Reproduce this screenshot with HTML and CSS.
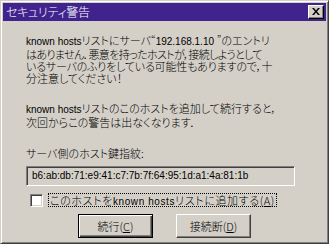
FILE: index.html
```html
<!DOCTYPE html>
<html lang="ja">
<head>
    <meta charset="UTF-8">
    <title>セキュリティ警告</title>
    <link rel="stylesheet" href="styles.css">
</head>
<body>
    <div class="window">
        <div class="title-bar">
            <span class="title-text">セキュリティ警告</span>
            <button class="close-btn" aria-label="閉じる">
                <svg width="8" height="7" viewBox="0 0 8 7">
                    <path d="M0 0h2l2 2.5 2-2.5h2l-3 3.5 3 3.5h-2l-2-2.5-2 2.5h-2l3-3.5z" fill="#000"/>
                </svg>
            </button>
        </div>

        <div class="content">
            <p class="msg">
                <span class="line"><span class="lat">known hosts</span>リストにサーバ“<span class="lat">192.168.1.10 </span>”のエントリ</span>
                <span class="line tight">はありません．悪意を持ったホストが，接続しようとして</span>
                <span class="line snug">いるサーバのふりをしている可能性もありますので，十</span>
                <span class="line">分注意してください！</span>
            </p>
            <p class="msg msg-second">
                <span class="line"><span class="lat">known hosts</span>リストのこのホストを追加して続行すると，</span>
                <span class="line">次回からこの警告は出なくなります．</span>
            </p>

            <div class="field-label">サーバ側のホスト鍵指紋:</div>
            <div class="fingerprint lat">b6:ab:db:71:e9:41:c7:7b:7f:64:95:1d:a1:4a:81:1b</div>

            <label class="check-row">
                <span class="checkbox"></span>
                <span class="check-label">このホストを<span class="lat">known hosts</span>リストに追加する(<u>A</u>)</span>
            </label>

            <div class="buttons">
                <button class="btn btn-default">続行(<u>C</u>)</button>
                <button class="btn">接続断(<u>D</u>)</button>
            </div>
        </div>
    </div>
</body>
</html>
```

FILE: styles.css
```css
/* Base */
* {
    margin: 0;
    padding: 0;
    box-sizing: border-box;
}
body {
    font-family: "Noto Sans CJK JP", "Noto Sans", sans-serif;
    font-size: 11px;
    font-weight: 300;
    font-feature-settings: "palt";
    line-height: 12px;
    color: #000;
    background-color: #d4d0c8;
}
.lat {
    font-family: "Liberation Sans", Arial, sans-serif;
    font-size: 10px;
    font-weight: 400;
}

/* Window frame */
.window {
    width: 329px;
    height: 244px;
    background-color: #d4d0c8;
    border: 1px solid;
    border-color: #d4d0c8 #404040 #404040 #d4d0c8;
    box-shadow: inset 1px 1px #fff, inset -1px -1px #808080;
    padding: 2px;
}
.title-bar {
    height: 18px;
    background-color: #41238e;
    color: #fff;
    display: flex;
    align-items: center;
    justify-content: space-between;
    padding: 0 2px;
}
.title-text {
    font-size: 12px;
    padding-left: 1px;
    letter-spacing: -0.3px;
}
.close-btn {
    width: 16px;
    height: 14px;
    background-color: #d4d0c8;
    border: 1px solid;
    border-color: #fff #000 #000 #fff;
    box-shadow: inset -1px -1px #808080;
    display: flex;
    align-items: center;
    justify-content: center;
    padding: 0 1px 1px 0;
}

/* Content */
.content {
    padding: 13px 0 0 23px;
}
.line {
    display: block;
    white-space: nowrap;
}
.line.tight {
    letter-spacing: -0.65px;
}
.line.snug {
    letter-spacing: -0.2px;
}
.msg-second {
    margin-top: 18px;
}
.field-label {
    margin-top: 19px;
}
.fingerprint {
    margin-top: 7px;
    width: 269px;
    height: 20px;
    line-height: 12px;
    border: 1px solid;
    border-color: #808080 #fff #fff #808080;
    box-shadow: inset 1px 1px #404040, inset -1px -1px #d4d0c8;
    padding: 3px 5px;
}
.check-row {
    margin-top: 7px;
    display: flex;
    align-items: center;
    height: 14px;
    padding-left: 4px;
}
.checkbox {
    width: 13px;
    height: 13px;
    background-color: #fff;
    border: 1px solid;
    border-color: #808080 #fff #fff #808080;
    box-shadow: inset 1px 1px #404040, inset -1px -1px #d4d0c8;
}
.check-label {
    margin-left: 5px;
    border: 1px dotted #000;
    height: 14px;
    line-height: 12px;
    padding: 0 1px;
    white-space: nowrap;
    letter-spacing: 0.6px;
}
.buttons {
    margin-top: 7px;
    display: flex;
    justify-content: center;
    gap: 23px;
    padding-right: 23px;
}
.btn {
    width: 75px;
    height: 24px;
    font-family: inherit;
    font-size: 11px;
    font-weight: 300;
    font-feature-settings: "palt";
    background-color: #d4d0c8;
    border: 1px solid;
    border-color: #fff #404040 #404040 #fff;
    box-shadow: inset -1px -1px #808080;
}
.btn-default {
    border: 1px solid #000;
    box-shadow: inset 1px 1px #fff, inset -1px -1px #404040, inset -2px -2px #808080;
}
```
